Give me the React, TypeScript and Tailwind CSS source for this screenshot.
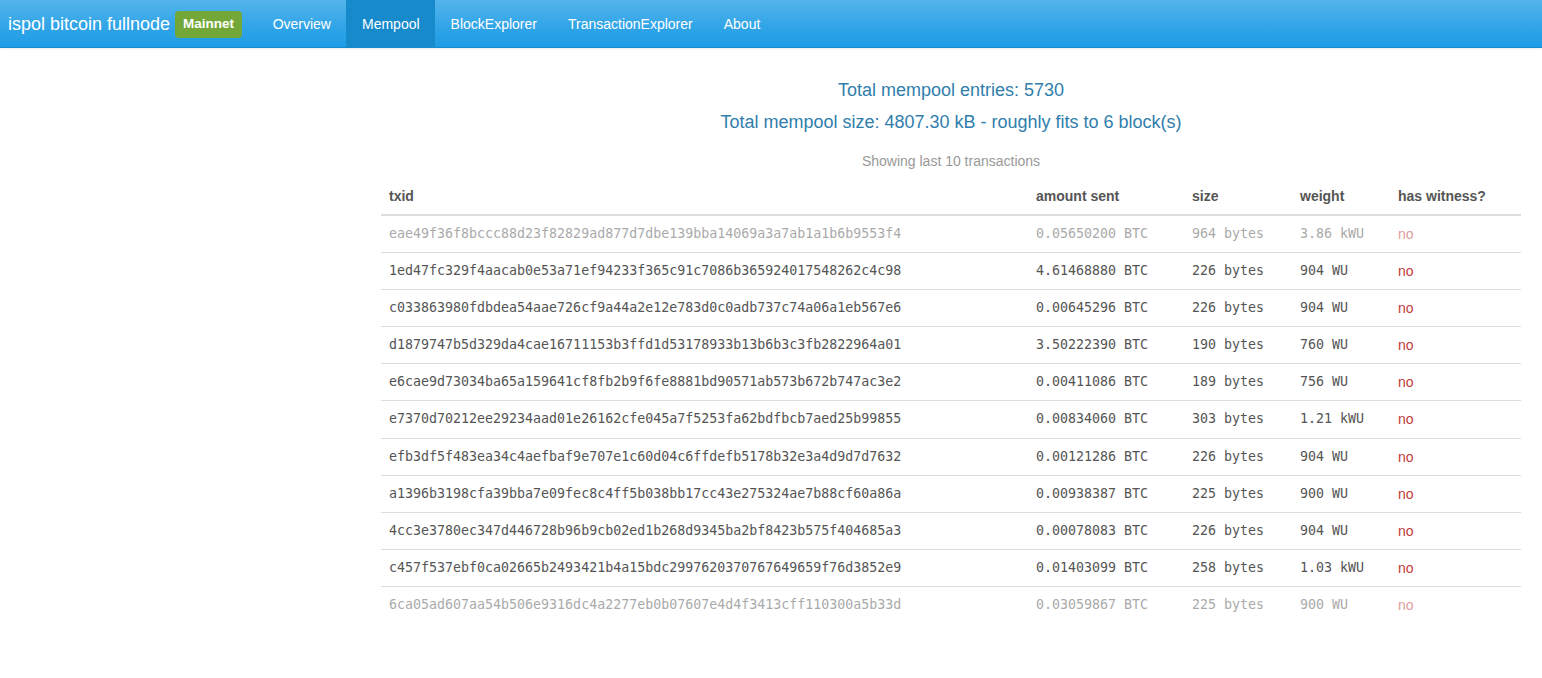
import React from "react";

type Tx = {
  txid: string;
  amount: string;
  size: string;
  weight: string;
  witness: string;
  faded?: boolean;
};

const txs: Tx[] = [
  { txid: "eae49f36f8bccc88d23f82829ad877d7dbe139bba14069a3a7ab1a1b6b9553f4", amount: "0.05650200 BTC", size: "964 bytes", weight: "3.86 kWU", witness: "no", faded: true },
  { txid: "1ed47fc329f4aacab0e53a71ef94233f365c91c7086b365924017548262c4c98", amount: "4.61468880 BTC", size: "226 bytes", weight: "904 WU", witness: "no" },
  { txid: "c033863980fdbdea54aae726cf9a44a2e12e783d0c0adb737c74a06a1eb567e6", amount: "0.00645296 BTC", size: "226 bytes", weight: "904 WU", witness: "no" },
  { txid: "d1879747b5d329da4cae16711153b3ffd1d53178933b13b6b3c3fb2822964a01", amount: "3.50222390 BTC", size: "190 bytes", weight: "760 WU", witness: "no" },
  { txid: "e6cae9d73034ba65a159641cf8fb2b9f6fe8881bd90571ab573b672b747ac3e2", amount: "0.00411086 BTC", size: "189 bytes", weight: "756 WU", witness: "no" },
  { txid: "e7370d70212ee29234aad01e26162cfe045a7f5253fa62bdfbcb7aed25b99855", amount: "0.00834060 BTC", size: "303 bytes", weight: "1.21 kWU", witness: "no" },
  { txid: "efb3df5f483ea34c4aefbaf9e707e1c60d04c6ffdefb5178b32e3a4d9d7d7632", amount: "0.00121286 BTC", size: "226 bytes", weight: "904 WU", witness: "no" },
  { txid: "a1396b3198cfa39bba7e09fec8c4ff5b038bb17cc43e275324ae7b88cf60a86a", amount: "0.00938387 BTC", size: "225 bytes", weight: "900 WU", witness: "no" },
  { txid: "4cc3e3780ec347d446728b96b9cb02ed1b268d9345ba2bf8423b575f404685a3", amount: "0.00078083 BTC", size: "226 bytes", weight: "904 WU", witness: "no" },
  { txid: "c457f537ebf0ca02665b2493421b4a15bdc2997620370767649659f76d3852e9", amount: "0.01403099 BTC", size: "258 bytes", weight: "1.03 kWU", witness: "no" },
  { txid: "6ca05ad607aa54b506e9316dc4a2277eb0b07607e4d4f3413cff110300a5b33d", amount: "0.03059867 BTC", size: "225 bytes", weight: "900 WU", witness: "no", faded: true },
];

const navItems = ["Overview", "Mempool", "BlockExplorer", "TransactionExplorer", "About"];

const App = () => {
  return (
    <div className="min-h-[678px] bg-white font-['Liberation_Sans',Arial,sans-serif] text-[14px] text-[#555555]">
      {/* navbar */}
      <div className="h-[48px] flex items-stretch bg-[linear-gradient(#54b4eb,#2fa4e7_60%,#1d9ce5)] border-b border-[#178acc] shadow-[0_1px_2px_rgba(0,0,0,0.08)]">
        <div className="flex items-center pl-[8px] pr-[15px] pt-[1px] text-white text-[18px]">
          ispol bitcoin fullnode
          <span className="ml-[5px] h-[27px] px-[8px] flex items-center rounded-[4px] bg-[#73a839] text-white font-bold text-[13.5px]">
            Mainnet
          </span>
        </div>
        <div className="flex items-stretch">
          {navItems.map((item) => (
            <div
              key={item}
              className={
                item === "Mempool"
                  ? "flex items-center pt-[1px] px-[15.5px] text-white bg-[#178acc]"
                  : "flex items-center pt-[1px] px-[15.5px] text-white"
              }
            >
              {item}
            </div>
          ))}
        </div>
      </div>

      {/* content */}
      <div className="ml-[381px] w-[1140px] pt-[31px]">
        <div className="text-center text-[#317eac] text-[18px] leading-[22px]">
          Total mempool entries: 5730
        </div>
        <div className="mt-[10px] text-center text-[#317eac] text-[18px] leading-[22px]">
          Total mempool size: 4807.30 kB - roughly fits to 6 block(s)
        </div>
        <div className="mt-[19px] text-center text-[#999999] text-[14px] leading-[18px]">
          Showing last 10 transactions
        </div>

        <table className="mt-[8px] w-full border-collapse">
          <thead>
            <tr className="border-b-2 border-[#dddddd]">
              <th className="text-left font-bold px-[8px] py-[8px] leading-[20px] w-[647px]">txid</th>
              <th className="text-left font-bold px-[8px] py-[8px] leading-[20px] w-[156px]">amount sent</th>
              <th className="text-left font-bold px-[8px] py-[8px] leading-[20px] w-[108px]">size</th>
              <th className="text-left font-bold px-[8px] py-[8px] leading-[20px] w-[98px]">weight</th>
              <th className="text-left font-bold px-[8px] py-[8px] leading-[20px]">has witness?</th>
            </tr>
          </thead>
          <tbody>
            {txs.map((tx) => (
              <tr
                key={tx.txid}
                className={tx.faded ? "border-b border-[#dddddd] opacity-50 last:border-b-0" : "border-b border-[#dddddd]"}
              >
                <td className="px-[8px] pt-[8px] pb-[8.1px] leading-[20px] font-['DejaVu_Sans_Mono',monospace] text-[13.3px]">{tx.txid}</td>
                <td className="px-[8px] pt-[8px] pb-[8.1px] leading-[20px] font-['DejaVu_Sans_Mono',monospace] text-[13.3px]">{tx.amount}</td>
                <td className="px-[8px] pt-[8px] pb-[8.1px] leading-[20px] font-['DejaVu_Sans_Mono',monospace] text-[13.3px]">{tx.size}</td>
                <td className="px-[8px] pt-[8px] pb-[8.1px] leading-[20px] font-['DejaVu_Sans_Mono',monospace] text-[13.3px]">{tx.weight}</td>
                <td className="px-[8px] pt-[8px] pb-[8.1px] leading-[20px] text-[#c23b3b]">{tx.witness}</td>
              </tr>
            ))}
          </tbody>
        </table>
      </div>
    </div>
  );
};

export default App;
